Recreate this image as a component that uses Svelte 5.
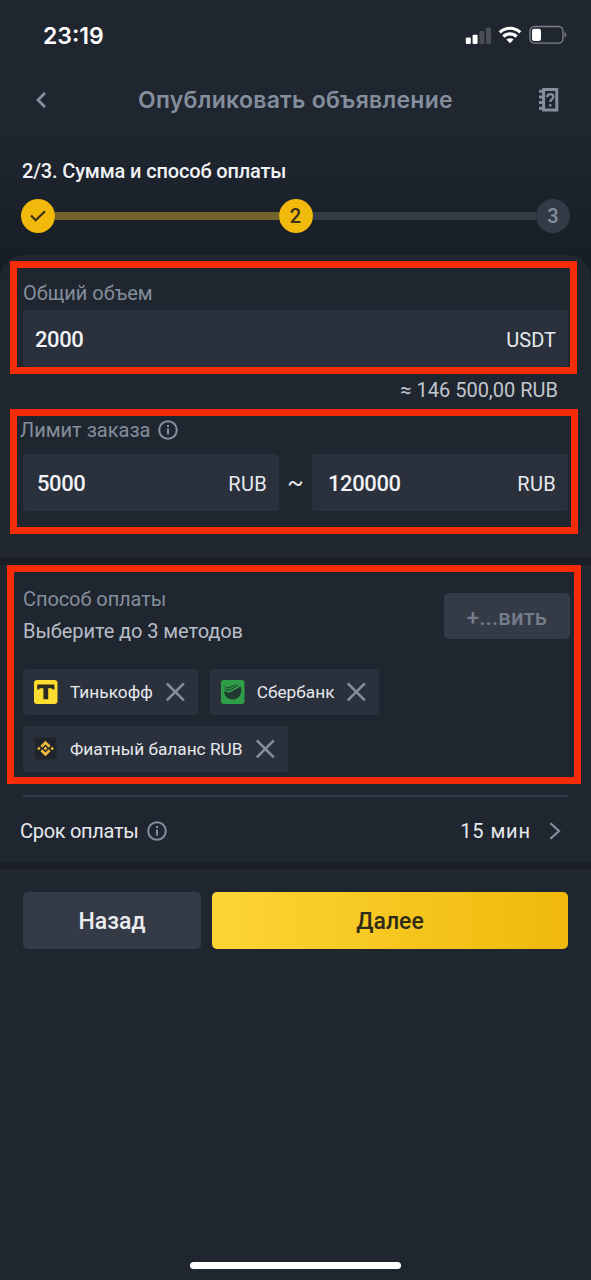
<script>
  const methods = [
    { id: 'tinkoff', name: 'Тинькофф' },
    { id: 'sber', name: 'Сбербанк' },
    { id: 'fiat', name: 'Фиатный баланс RUB' },
  ]
</script>

{#snippet info()}
  <svg class="info" viewBox="0 0 20 20">
    <circle cx="10" cy="10" r="8.8" />
    <path d="M10 8.6v6M10 5v2" />
  </svg>
{/snippet}

<main>
  <div class="top">
    <div class="status">
      <span class="time">23:19</span>
      <div class="indicators">
        <svg class="signal" viewBox="0 0 26 18">
          <rect x=".8" y="11.500" width="5" height="6.500" rx="1.200" />
          <rect x="7.600" y="8.700" width="5" height="9.300" rx="1.200" />
          <rect class="dim" x="14.400" y="5" width="5" height="13" rx="1.200" />
          <rect class="dim" x="21" y="1.500" width="5" height="16.500" rx="1.200" />
        </svg>
        <svg class="wifi" viewBox="0 0 24 18">
          <path d="M1.800 6.400a14.600 14.600 0 0 1 20.400 0M5.400 10.500a9.400 9.400 0 0 1 13.200 0" />
          <path class="dot" d="M12 17.200l-3.600-3.600a5.200 5.200 0 0 1 7.200 0z" />
        </svg>
        <svg class="battery" viewBox="0 0 38 20">
          <rect class="shell" x="1" y="1.500" width="33" height="16.600" rx="4.600" />
          <rect class="charge" x="3" y="3.800" width="9" height="12.200" rx="2.200" />
          <path class="shell-tip" d="M35.600 7v5.600c1.400-.5 1.800-1.600 1.800-2.800s-.4-2.300-1.800-2.800z" />
        </svg>
      </div>
    </div>

    <header>
      <svg class="back" viewBox="0 0 12 18"><path d="M10 2L3 9l7 7" /></svg>
      <h1>Опубликовать объявление</h1>
      <svg class="guide" viewBox="0 0 20 24">
        <path class="cover" d="M4.600 1.500h13.200v20.600H4.600z" />
        <path class="rings" d="M0 3.200h4M0 8.900h4M0 14.600h4M0 20.300h4" />
        <path class="mark" d="M8.200 9.200c0-4 6.200-4 6.200-.4 0 2.200-3.100 2.400-3.100 5.200" />
        <path class="mark" d="M11.300 16.200v2.300" />
      </svg>
    </header>

    <div class="step-title">2/3. Сумма и способ оплаты</div>
    <div class="stepper">
      <span class="step done">
        <svg viewBox="0 0 16 12"><path d="M1 5.500l4.700 4.700L15 1.200" /></svg>
      </span>
      <span class="line passed"></span>
      <span class="step done">2</span>
      <span class="line"></span>
      <span class="step">3</span>
    </div>
  </div>

  <div class="card">
    <section class="volume">
      <div class="label">Общий объем</div>
      <div class="field">
        <b>2000</b>
        <span>USDT</span>
      </div>
      <div class="approx">≈ 146 500,00 RUB</div>
      <div class="frame"></div>
    </section>

    <section class="limit">
      <div class="label shifted">Лимит заказа {@render info()}</div>
      <div class="range">
        <div class="field">
          <b>5000</b>
          <span class="unit">RUB</span>
        </div>
        <span class="tilde">~</span>
        <div class="field">
          <b>120000</b>
          <span class="unit">RUB</span>
        </div>
      </div>
      <div class="frame"></div>
    </section>

    <section class="payment">
      <div class="payment-head">
        <div>
          <div class="label">Способ оплаты</div>
          <div class="hint">Выберите до 3 методов</div>
        </div>
        <button class="add">+...вить</button>
      </div>
      <div class="chips">
        {#each methods as method}
          <div class="chip">
            {#if method.id === 'tinkoff'}
              <svg class="logo" viewBox="0 0 24 24">
                <rect width="23.500" height="24" rx="3" fill="#fddd2f" />
                <path d="M3.200 4.600h17.200v4.800h-1.800l-.8-1.200h-3.600v11H9.400v-11H5.800L5 9.400H3.200z" fill="#2e2c22" />
              </svg>
            {:else if method.id === 'sber'}
              <svg class="logo" viewBox="0 0 24 24">
                <rect width="23.500" height="24" rx="3" fill="#2f9c48" />
                <path d="M3.300 10.800c2.400 2 4.900 2.100 7.200.6l9.300-4.800c1.800 6.400-1.200 13-8 13-5.500 0-8.800-4-8.500-8.800z" fill="#20382f" />
                <path d="M3.800 6.600c2 1.700 4.400 1.600 6.200.4l4.500-2.500M3.500 8.700c2.500 1.800 4.800 1.800 7 .4l7-4" fill="none" stroke="#20382f" stroke-width="1" />
              </svg>
            {:else}
              <svg class="logo" viewBox="0 0 24 24">
                <rect x=".5" y=".5" width="22" height="22" rx="2" fill="#20242b" />
                <g transform="translate(11.500 11.500)" fill="#eebb3a">
                  <path d="M-5.100-2.700L0-7.800l5.100 5.100-1.900 1.900L0-4l-3.200 3.200zM-5.100 2.700L0 7.800l5.100-5.100L3.200.8 0 4-3.200.8z" />
                  <path d="M0-1.900L1.900 0 0 1.900-1.900 0zM-6.600-1.800L-4.800 0l-1.800 1.800L-8.400 0zM6.600-1.800L8.400 0 6.600 1.800 4.800 0z" />
                </g>
              </svg>
            {/if}
            <span>{method.name}</span>
            <svg class="remove" viewBox="0 0 20 20"><path d="M1.800 1.300l17 17M18.800 1.300l-17 17" /></svg>
          </div>
        {/each}
      </div>
      <div class="frame"></div>
    </section>

    <section class="term">
      <span class="term-label">Срок оплаты</span>
      {@render info()}
      <span class="term-value">15 мин</span>
      <svg class="forward" viewBox="0 0 12 18"><path d="M1.500 1.200L10 9l-8.500 7.800" /></svg>
    </section>

    <div class="actions">
      <button class="secondary">Назад</button>
      <button class="primary">Далее</button>
    </div>
  </div>

  <div class="home"></div>
</main>

<style>
  :global(body) {
    background: #202630;
  }
  main {
    position: relative;
    height: 1280px;
    overflow: hidden;
    background: #202630;
    color: #e6e9ee;
    font-family: Roboto, "Noto Sans", sans-serif;
    font-size: 20px;
    line-height: 24px;
  }
  svg {
    display: block;
    flex: none;
    fill: none;
  }
  button {
    border: 0;
    padding: 3px 0 0;
    font: inherit;
  }
  .top {
    height: 255px;
    background: linear-gradient(#202630 0, #202630 135px, #181e25 255px);
  }

  /* Status bar */
  .status {
    display: flex;
    align-items: center;
    justify-content: space-between;
    height: 70px;
    padding: 0 24px 0 43px;
  }
  .time {
    padding-top: 1px;
    color: #fff;
    font: 600 23px/26px Inter, sans-serif;
  }
  .indicators {
    display: flex;
    align-items: center;
    gap: 7px;
  }
  .indicators rect,
  .dot {
    fill: #fff;
  }
  .indicators .dim {
    fill: #4a4f57;
  }
  .signal {
    width: 26px;
    height: 18px;
  }
  .wifi {
    width: 24px;
    height: 18px;
    stroke: #fff;
    stroke-width: 3.2;
  }
  .wifi .dot {
    stroke: none;
  }
  .battery {
    width: 38px;
    height: 20px;
  }
  .battery .shell {
    fill: none;
    stroke: #7d8187;
    stroke-width: 1.4;
  }
  .shell-tip {
    fill: #7d8187;
  }

  /* Header */
  header {
    display: flex;
    align-items: center;
    justify-content: space-between;
    height: 60px;
    padding: 0 32px 0 35px;
  }
  h1 {
    margin: 0 0 0 5px;
    color: #848e9c;
    font: 600 23px/28px Inter, sans-serif;
    letter-spacing: .27px;
  }
  .back {
    width: 12px;
    height: 18px;
    stroke: #848e9c;
    stroke-width: 2.8;
  }
  .guide {
    width: 20px;
    height: 24px;
    stroke: #848e9c;
    stroke-width: 3;
  }
  .guide .mark {
    stroke-width: 2.4;
  }

  /* Steps */
  .step-title {
    margin-top: 29px;
    padding-left: 22px;
    color: #f0f2f5;
    font-weight: 500;
    letter-spacing: -.15px;
  }
  .stepper {
    display: flex;
    align-items: center;
    margin: 16px 21px 0;
  }
  .step {
    display: flex;
    align-items: center;
    justify-content: center;
    width: 34px;
    height: 34px;
    border-radius: 50%;
    background: #343a46;
    color: #848e9c;
    font-weight: 500;
  }
  .step.done {
    background: #f0b90b;
    color: #3a3016;
  }
  .step svg {
    width: 16px;
    height: 12px;
    stroke: #3a3016;
    stroke-width: 2.2;
  }
  .line {
    flex: 1;
    height: 8px;
    background: #343a46;
  }
  .line.passed {
    background: #74632a;
  }

  /* Form */
  .card {
    border-radius: 24px 24px 0 0;
    background: #202630;
    box-shadow: 0 0 0 24px #181e25;
    clip-path: inset(0);
  }
  section {
    position: relative;
    box-sizing: border-box;
    padding: 0 23px;
  }
  .frame {
    position: absolute;
    border: 7px solid #f82c09;
    pointer-events: none;
  }
  .label {
    color: #848e9c;
  }
  .field {
    display: flex;
    align-items: center;
    justify-content: space-between;
    height: 57px;
    padding: 2px 12px 0;
    box-sizing: border-box;
    border-radius: 4px;
    background: #2b313c;
  }
  .field b {
    color: #f0f2f5;
    font-size: 22px;
    font-weight: 500;
    letter-spacing: -.4px;
  }
  .unit {
    letter-spacing: .3px;
  }
  .info {
    width: 20px;
    height: 20px;
    stroke: #848e9c;
    stroke-width: 2;
  }

  .volume {
    height: 154px;
    padding-top: 26px;
  }
  .volume .field {
    margin-top: 5px;
    padding-top: 3px;
  }
  .volume .frame {
    inset: 6px 14px auto 10px;
    height: 99px;
  }
  .approx {
    margin-top: 11px;
    padding-right: 10px;
    color: #c2c6cd;
    text-align: right;
  }

  .limit {
    height: 156px;
    padding-top: 9px;
    border-bottom: 8px solid #1a1f27;
  }
  .shifted {
    display: flex;
    align-items: center;
    gap: 8px;
    margin-left: -3px;
  }
  .range {
    display: flex;
    align-items: center;
    margin-top: 12px;
  }
  .range .field {
    width: 256px;
    padding-left: 14px;
  }
  .range .field:last-child {
    padding-left: 16px;
  }
  .tilde {
    flex: 1;
    text-align: center;
    font-size: 24px;
  }
  .limit .frame {
    inset: 0 13px auto 10px;
    height: 111px;
  }

  .payment {
    height: 230px;
    padding-top: 22px;
  }
  .payment-head {
    display: flex;
    justify-content: space-between;
    margin-right: -2px;
  }
  .payment .label,
  .hint {
    letter-spacing: -.08px;
  }
  .hint {
    margin-top: 8px;
    color: #b7bdc6;
  }
  .add {
    width: 126px;
    height: 46px;
    margin-top: 6px;
    border-radius: 5px;
    background: #343a46;
    color: #747c89;
    font-size: 22px;
    font-weight: 500;
    letter-spacing: .2px;
  }
  .chips {
    display: flex;
    flex-wrap: wrap;
    gap: 11px 12px;
    margin-top: 26px;
  }
  .chip {
    display: flex;
    align-items: center;
    gap: 12px;
    height: 46px;
    padding: 0 13px 0 11px;
    border-radius: 3px;
    background: #2b313c;
    font-size: 17.25px;
  }
  .logo {
    width: 24px;
    height: 24px;
  }
  .remove {
    width: 20px;
    height: 20px;
    stroke: #848e9c;
    stroke-width: 2.6;
  }
  .payment .frame {
    inset: 0 10px auto 7px;
    height: 205px;
  }

  .term {
    display: flex;
    align-items: center;
    height: 74px;
    padding: 4px 30px 0 20px;
    border-bottom: 6px solid #1a1f27;
  }
  .term::before {
    content: "";
    position: absolute;
    top: 0;
    left: 23px;
    right: 23px;
    height: 2px;
    background: #343a46;
  }
  .term-label {
    letter-spacing: -.3px;
  }
  .term .info {
    margin-left: 8px;
  }
  .term-value {
    margin-left: auto;
    letter-spacing: .9px;
  }
  .forward {
    width: 12px;
    height: 18px;
    margin-left: 18px;
    stroke: #848e9c;
    stroke-width: 2.2;
  }

  .actions {
    display: flex;
    gap: 11px;
    padding: 23px;
    font-size: 23px;
    font-weight: 500;
  }
  .actions button {
    height: 57px;
    border-radius: 5px;
  }
  .secondary {
    width: 178px;
    background: #343a46;
    color: #eaecef;
  }
  .primary {
    flex: 1;
    background: linear-gradient(90deg, #fcd535, #f0b90b);
    color: #302a18;
  }

  .home {
    position: absolute;
    bottom: 11px;
    left: 190px;
    width: 211px;
    height: 7px;
    border-radius: 4px;
    background: #fff;
  }
</style>
